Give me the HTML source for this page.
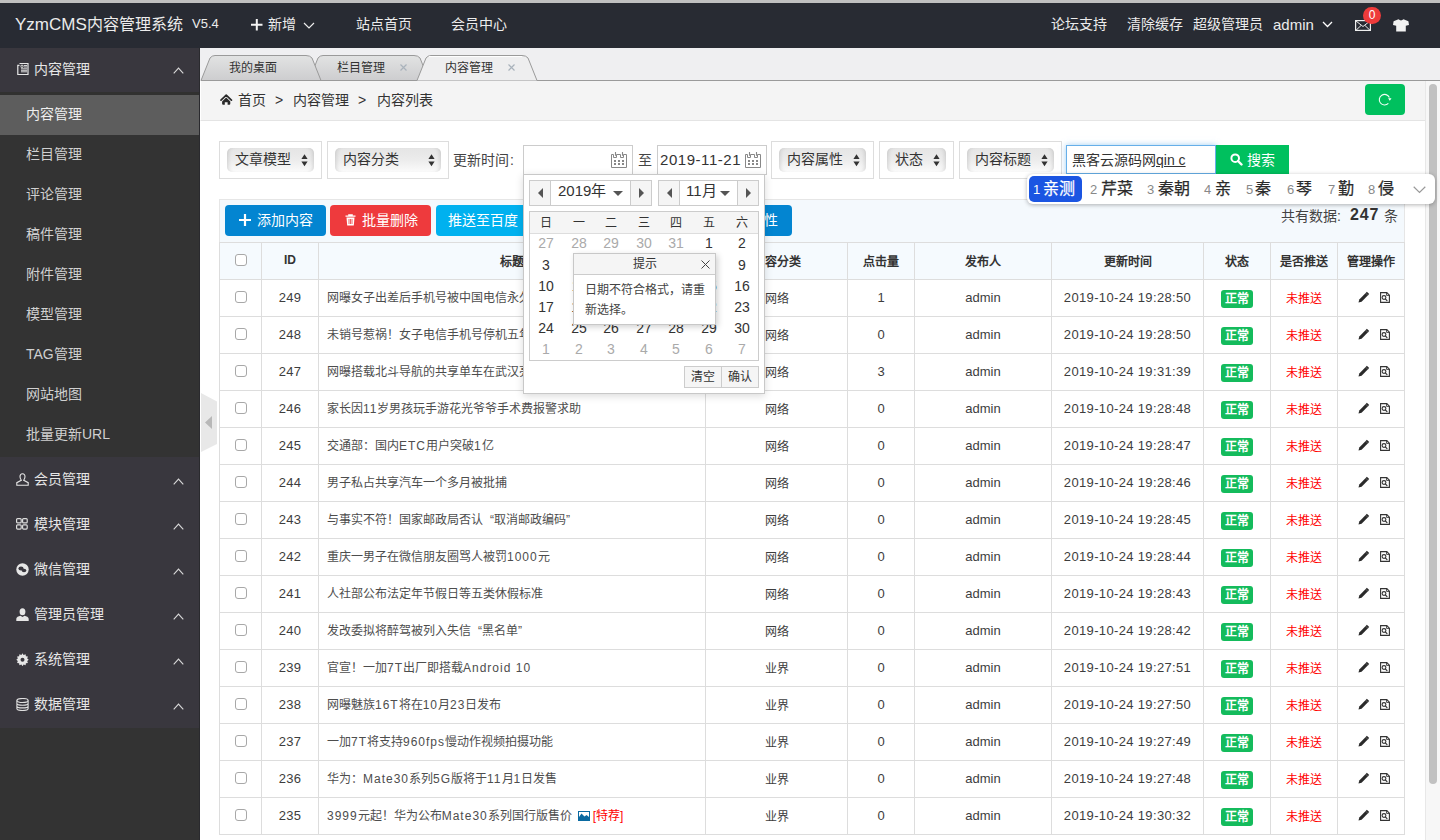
<!DOCTYPE html><html lang="zh-CN"><head><meta charset="utf-8"><style>
*{box-sizing:border-box;margin:0;padding:0}
html,body{width:1440px;height:840px;overflow:hidden;background:#fff;font-family:"Liberation Sans",sans-serif;color:#333}
.abs{position:absolute}
.t{position:absolute;white-space:nowrap}
.top{left:0;top:0;width:1440px;height:3px;background:#c0c0c0}
.hdr{left:0;top:3px;width:1440px;height:45px;background:#282b33;color:#ececec}
.side{left:0;top:48px;width:200px;height:792px;background:#333333;border-right:1px solid #2a2a2e}
.sh{position:absolute;left:0;width:199px;background:#39373e;color:#e6e6e6;font-size:14px}
.si{position:absolute;left:0;width:199px;height:40px;color:#d4d4d4;font-size:14px}
.tabbar{left:200px;top:48px;width:1240px;height:33px;background:#efeff1}
.crumb{left:200px;top:81px;width:1225px;height:40px;background:#f4f4f4;border-bottom:1px solid #e4e4e4;border-left:1px solid #fff}
.content{left:200px;top:121px;width:1225px;height:719px;background:#fff}
.sb{left:1425px;top:81px;width:15px;height:759px;background:#f7f7f7;border-left:1px solid #e8e8e8}
.thumb{left:1429px;top:84px;width:8px;height:700px;background:#c1c1c1;border-radius:4px}
.box{position:absolute;border:1px solid #ddd;background:#fff;top:141px;height:38px}
.sel{position:absolute;top:6px;height:24px;border-radius:5px;background:linear-gradient(#e5e5e5 0%,#ececec 50%,#fbfbfb 100%);box-shadow:inset 4px 0 4px -3px rgba(0,0,0,.14),inset -4px 0 4px -3px rgba(0,0,0,.14);font-size:14px;color:#333}
.sel .t{left:8px;top:1px;line-height:20px}
.arr{position:absolute;right:6px;top:6px;width:7px;height:13px}
.btn{position:absolute;top:205px;height:31px;border-radius:4px;color:#fff;font-size:14px;line-height:31px;white-space:nowrap}
table.g{position:absolute;left:219px;top:242px;border-collapse:collapse;table-layout:fixed;font-size:13px;color:#3d3d3d}
table.g td,table.g th{border:1px solid #ddd;height:37px;text-align:center;padding:0 0 2px 0;white-space:nowrap;overflow:hidden}
table.g th{background:#f5fafe;font-size:12px;font-weight:bold;color:#333}
table.g td.ti{text-align:left;padding:0 0 3px 8px;font-size:12px;color:#4d4d4d}
.ls{letter-spacing:1px}
table.g td.num{letter-spacing:.35px}
.cb{display:inline-block;width:12px;height:12px;border:1px solid #a8a8a8;border-radius:3px;background:#fff;vertical-align:middle;margin-top:-2px}
.badge{display:inline-block;width:32px;height:18px;line-height:19px;background:#14bb5c;color:#fff;border-radius:3px;font-size:12px;font-weight:bold;vertical-align:middle;position:relative;top:2px}
.red{color:#f00;font-size:12px}
.dp{left:523px;top:174px;width:242px;height:220px;background:#fff;border:1px solid #c8c8c8;box-shadow:0 2px 8px rgba(0,0,0,.15)}
</style></head><body>
<div class="abs top"></div>
<div class="abs hdr">
<div class="t" style="left:15px;top:12px;font-size:16px;line-height:20px"><span style="font-size:17px">YzmCMS</span>内容管理系统</div>
<div class="t" style="left:192px;top:12px;font-size:13px;line-height:18px">V5.4</div>
<svg class="abs" style="left:251px;top:16px" width="12" height="12"><path d="M5.8 0V11.5M0 5.75H11.5" stroke="#f4f4f4" stroke-width="2"/></svg>
<div class="t" style="left:268px;top:11px;font-size:14px;line-height:20px">新增</div>
<svg class="abs" style="left:302.5px;top:18.5px" width="12" height="8"><path d="M1 1L6 6L11 1" stroke="#eee" stroke-width="1.2" fill="none"/></svg>
<div class="t" style="left:356px;top:11px;font-size:14px;line-height:20px">站点首页</div>
<div class="t" style="left:451px;top:11px;font-size:14px;line-height:20px">会员中心</div>
<div class="t" style="left:1051px;top:11px;font-size:14px;line-height:20px">论坛支持</div>
<div class="t" style="left:1127px;top:11px;font-size:14px;line-height:20px">清除缓存</div>
<div class="t" style="left:1193px;top:11px;font-size:14px;line-height:20px">超级管理员</div>
<div class="t" style="left:1273px;top:12px;font-size:15px;line-height:20px">admin</div>
<svg class="abs" style="left:1322px;top:18px" width="11" height="8"><path d="M1 1L5.5 5.5L10 1" stroke="#fff" stroke-width="1.3" fill="none"/></svg>
<svg class="abs" style="left:1355px;top:17px" width="16" height="11"><rect x="0.6" y="0.6" width="14.8" height="9.8" fill="none" stroke="#eee" stroke-width="1.2"/><path d="M1 1L8 6.5L15 1M1 10.3L6 5.5M15 10.3L10 5.5" stroke="#eee" stroke-width="1" fill="none"/></svg>
<div class="abs" style="left:1363px;top:4px;width:18px;height:17px;border-radius:9px;background:#ee3b3b;color:#fff;font-size:12px;line-height:17px;text-align:center">0</div>
<svg class="abs" style="left:1393px;top:16px" width="16" height="13"><path d="M5.5 0.3L0.6 2.3L0 6L3.2 6.8V12.6H12.8V6.8L16 6L15.4 2.3L10.5 0.3Q8 2.6 5.5 0.3Z" fill="#f2f2f2"/></svg>
</div>
<div class="abs side"></div>
<div class="sh" style="top:48px;height:44px"></div>
<svg class="abs" style="left:16px;top:62px" width="13" height="13"><path d="M3.5 1.5h8.5v11H1.8V3.3h1.7" fill="none" stroke="#e6e6e6" stroke-width="1.2"/><path d="M5 3.3h2v2h-2zM8 3.5h3M8 5h3M5 6.8h6M5 8.3h6M5 9.8h6" stroke="#e6e6e6" stroke-width="0.9"/></svg>
<div class="t" style="left:34px;top:59px;font-size:14px;line-height:20px;color:#e6e6e6">内容管理</div>
<svg class="abs" style="left:173px;top:67px" width="11" height="7"><path d="M0.7 6.3L5.5 1.2L10.3 6.3" stroke="#d8d8d8" stroke-width="1.15" fill="none"/></svg>
<div class="abs" style="left:0;top:92px;width:199px;height:3px;background:#313130"></div>
<div class="si" style="top:95px;background:#5d5d5d;"></div>
<div class="t" style="left:26px;top:104px;font-size:14px;line-height:20px;color:#eee">内容管理</div>
<div class="si" style="top:135px;"></div>
<div class="t" style="left:26px;top:144px;font-size:14px;line-height:20px;color:#d0d0d0">栏目管理</div>
<div class="si" style="top:175px;"></div>
<div class="t" style="left:26px;top:184px;font-size:14px;line-height:20px;color:#d0d0d0">评论管理</div>
<div class="si" style="top:215px;"></div>
<div class="t" style="left:26px;top:224px;font-size:14px;line-height:20px;color:#d0d0d0">稿件管理</div>
<div class="si" style="top:255px;"></div>
<div class="t" style="left:26px;top:264px;font-size:14px;line-height:20px;color:#d0d0d0">附件管理</div>
<div class="si" style="top:295px;"></div>
<div class="t" style="left:26px;top:304px;font-size:14px;line-height:20px;color:#d0d0d0">模型管理</div>
<div class="si" style="top:335px;"></div>
<div class="t" style="left:26px;top:344px;font-size:14px;line-height:20px;color:#d0d0d0">TAG管理</div>
<div class="si" style="top:375px;"></div>
<div class="t" style="left:26px;top:384px;font-size:14px;line-height:20px;color:#d0d0d0">网站地图</div>
<div class="si" style="top:415px;"></div>
<div class="t" style="left:26px;top:424px;font-size:14px;line-height:20px;color:#d0d0d0">批量更新URL</div>
<div class="sh" style="top:457px;height:271px"></div>
<svg class="abs" style="left:16px;top:473px" width="13" height="13"><path d="M6.5 0.8C4.6 0.8 4 2.4 4 3.8C4 5.2 4.8 6.5 5.3 7.3L0.8 9.7V12.3H12.2V9.7L7.7 7.3C8.2 6.5 9 5.2 9 3.8C9 2.4 8.4 0.8 6.5 0.8Z" fill="none" stroke="#e6e6e6" stroke-width="1.1"/></svg>
<div class="t" style="left:34px;top:469px;font-size:14px;line-height:20px;color:#e6e6e6">会员管理</div>
<svg class="abs" style="left:173px;top:478px" width="11" height="7"><path d="M0.7 6.3L5.5 1.2L10.3 6.3" stroke="#d8d8d8" stroke-width="1.15" fill="none"/></svg>
<svg class="abs" style="left:16px;top:518px" width="12" height="12"><rect x="0.6" y="0.6" width="4.6" height="4.3" rx="1" fill="none" stroke="#ddd" stroke-width="1.2"/><rect x="6.6" y="0.6" width="4.6" height="4.3" rx="1" fill="none" stroke="#ddd" stroke-width="1.2"/><rect x="0.6" y="6.8" width="4.6" height="4.3" rx="1" fill="none" stroke="#ddd" stroke-width="1.2"/><rect x="6.6" y="6.8" width="4.6" height="4.3" rx="1" fill="none" stroke="#ddd" stroke-width="1.2"/></svg>
<div class="t" style="left:34px;top:514px;font-size:14px;line-height:20px;color:#e6e6e6">模块管理</div>
<svg class="abs" style="left:173px;top:523px" width="11" height="7"><path d="M0.7 6.3L5.5 1.2L10.3 6.3" stroke="#d8d8d8" stroke-width="1.15" fill="none"/></svg>
<svg class="abs" style="left:16px;top:563px" width="13" height="13"><circle cx="6.5" cy="6.5" r="6.2" fill="#e6e6e6"/><ellipse cx="5" cy="5.5" rx="2.6" ry="2" fill="#39373e"/><ellipse cx="8" cy="7.5" rx="2.3" ry="1.8" fill="#39373e"/></svg>
<div class="t" style="left:34px;top:559px;font-size:14px;line-height:20px;color:#e6e6e6">微信管理</div>
<svg class="abs" style="left:173px;top:568px" width="11" height="7"><path d="M0.7 6.3L5.5 1.2L10.3 6.3" stroke="#d8d8d8" stroke-width="1.15" fill="none"/></svg>
<svg class="abs" style="left:16px;top:608px" width="13" height="13"><ellipse cx="6.5" cy="3.8" rx="2.9" ry="3.5" fill="#e6e6e6"/><path d="M0.3 13V10.8C0.3 9.2 2.5 8.2 4.5 7.8L6.5 9L8.5 7.8C10.5 8.2 12.7 9.2 12.7 10.8V13Z" fill="#e6e6e6"/></svg>
<div class="t" style="left:34px;top:604px;font-size:14px;line-height:20px;color:#e6e6e6">管理员管理</div>
<svg class="abs" style="left:173px;top:613px" width="11" height="7"><path d="M0.7 6.3L5.5 1.2L10.3 6.3" stroke="#d8d8d8" stroke-width="1.15" fill="none"/></svg>
<svg class="abs" style="left:16px;top:653px" width="13" height="13"><path d="M6.5 0.3L7.6 2.1L9.6 1.3L9.9 3.2L11.9 3.6L11.2 5.6L12.7 6.8L11.2 8L11.9 10L9.9 10.3L9.6 12.3L7.6 11.5L6.5 13.2L5.4 11.5L3.4 12.3L3.1 10.3L1.1 10L1.8 8L0.3 6.8L1.8 5.6L1.1 3.6L3.1 3.2L3.4 1.3L5.4 2.1Z" fill="#e6e6e6"/><circle cx="6.5" cy="6.8" r="2" fill="#39373e"/></svg>
<div class="t" style="left:34px;top:649px;font-size:14px;line-height:20px;color:#e6e6e6">系统管理</div>
<svg class="abs" style="left:173px;top:658px" width="11" height="7"><path d="M0.7 6.3L5.5 1.2L10.3 6.3" stroke="#d8d8d8" stroke-width="1.15" fill="none"/></svg>
<svg class="abs" style="left:16px;top:698px" width="13" height="13"><ellipse cx="6.5" cy="2.5" rx="5.6" ry="2" fill="none" stroke="#e0e0e0" stroke-width="1.1"/><path d="M0.9 2.5V10.5C0.9 11.6 3.4 12.5 6.5 12.5C9.6 12.5 12.1 11.6 12.1 10.5V2.5M0.9 5.2C0.9 6.3 3.4 7.2 6.5 7.2C9.6 7.2 12.1 6.3 12.1 5.2M0.9 7.9C0.9 9 3.4 9.9 6.5 9.9C9.6 9.9 12.1 9 12.1 7.9" fill="none" stroke="#e0e0e0" stroke-width="1.1"/></svg>
<div class="t" style="left:34px;top:694px;font-size:14px;line-height:20px;color:#e6e6e6">数据管理</div>
<svg class="abs" style="left:173px;top:703px" width="11" height="7"><path d="M0.7 6.3L5.5 1.2L10.3 6.3" stroke="#d8d8d8" stroke-width="1.15" fill="none"/></svg>
<div class="abs tabbar"></div>
<svg class="abs" style="left:200px;top:48px" width="1240" height="34">
<defs><linearGradient id="tg" x1="0" y1="0" x2="0" y2="1"><stop offset="0" stop-color="#e2e3e3"/><stop offset="1" stop-color="#cdcdcf"/></linearGradient></defs>
<path d="M1 32.5H1240" stroke="#9a9a9a" stroke-width="1"/>
<path d="M109 32.5L118 10Q120 7.5 123 7.5H214Q218 7.5 220 10L229 32.5Z" fill="url(#tg)" stroke="#9a9a9a" stroke-width="1"/>
<path d="M1 32.5L10 10Q12 7.5 15 7.5H106Q110 7.5 112 10L121 32.5Z" fill="url(#tg)" stroke="#9a9a9a" stroke-width="1"/>
<path d="M217 32.5L226 10Q228 7.5 231 7.5H322Q326 7.5 328 10L337 32.5" fill="#eeeeef" stroke="#9a9a9a" stroke-width="1"/>
<path d="M218 33.5H336" stroke="#eeeeef" stroke-width="1.2"/>
<path d="M229 8.6H322" stroke="#fff" stroke-width="1"/>
</svg>
<div class="t" style="left:229px;top:60px;font-size:12px;line-height:16px;color:#333">我的桌面</div>
<div class="t" style="left:337px;top:60px;font-size:12px;line-height:16px;color:#333">栏目管理</div>
<div class="t" style="left:445px;top:60px;font-size:12px;line-height:16px;color:#333">内容管理</div>
<svg class="abs" style="left:400px;top:64px" width="7" height="7"><path d="M0.5 0.5L6.5 6.5M6.5 0.5L0.5 6.5" stroke="#a9b2bb" stroke-width="1.2"/></svg>
<svg class="abs" style="left:508px;top:64px" width="7" height="7"><path d="M0.5 0.5L6.5 6.5M6.5 0.5L0.5 6.5" stroke="#a9b2bb" stroke-width="1.2"/></svg>
<div class="abs crumb"></div>
<svg class="abs" style="left:219.5px;top:94px" width="13" height="11"><path d="M1 6.2L6.2 1.2L11.4 6.2" fill="none" stroke="#2a2a2a" stroke-width="1.7" stroke-linecap="round" stroke-linejoin="round"/><path d="M6.2 3.6L10.3 7.4V9.8Q10.3 10.8 9.3 10.8H7.6V8.2H4.8V10.8H3.1Q2.1 10.8 2.1 9.8V7.4Z" fill="#2a2a2a"/></svg>
<div class="t" style="left:238px;top:90px;font-size:14px;line-height:20px;color:#333">首页</div>
<div class="t" style="left:275px;top:90px;font-size:14px;line-height:20px;color:#333">&gt;</div>
<div class="t" style="left:293px;top:90px;font-size:14px;line-height:20px;color:#333">内容管理</div>
<div class="t" style="left:358px;top:90px;font-size:14px;line-height:20px;color:#333">&gt;</div>
<div class="t" style="left:377px;top:90px;font-size:14px;line-height:20px;color:#333">内容列表</div>
<div class="abs" style="left:1365px;top:84px;width:40px;height:31px;border-radius:4px;background:#00c05e"></div>
<svg class="abs" style="left:1378px;top:93px" width="15" height="14"><path d="M11.4 4.46A5.3 5.3 0 1 0 10.35 10.45" fill="none" stroke="#f2fff6" stroke-width="1.1"/><path d="M10.1 5.3L13.5 5.3L11.8 7.7Z" fill="#fff"/></svg>
<div class="abs content"></div>
<div class="box" style="left:219px;width:103px"><div class="sel" style="left:7px;width:87px"><div class="t">文章模型</div><svg class="arr" viewBox="0 0 7 13"><path d="M3.5 0.3L6.6 5H0.4Z M3.5 12.3L6.6 7.6H0.4Z" fill="#333"/></svg></div></div>
<div class="box" style="left:327px;width:122px"><div class="sel" style="left:7px;width:106px"><div class="t">内容分类</div><svg class="arr" viewBox="0 0 7 13"><path d="M3.5 0.3L6.6 5H0.4Z M3.5 12.3L6.6 7.6H0.4Z" fill="#333"/></svg></div></div>
<div class="t" style="left:453px;top:150px;font-size:14px;line-height:20px;color:#444">更新时间<span style="margin-left:1px">:</span></div>
<div class="abs" style="left:523px;top:145px;width:110px;height:30px;border:1px solid #ccc;background:#fff"></div>
<svg class="abs" style="left:611px;top:152px" width="16" height="16"><path d="M0.5 2.5H2.5V5.5H5.5V2.5H9.5V5.5H12.5V2.5H15.5V15.5H0.5Z" fill="none" stroke="#888" stroke-width="1"/><path d="M4.5 0V3.8M11.5 0V3.8" stroke="#888" stroke-width="1.1"/><path d="M3 8h2v2h-2zM7 8h2v2h-2zM11 8h2v2h-2zM3 11h2v2h-2zM7 11h2v2h-2zM11 11h2v2h-2z" fill="#888"/></svg>
<div class="t" style="left:638px;top:150px;font-size:14px;line-height:20px;color:#444">至</div>
<div class="abs" style="left:657px;top:145px;width:110px;height:30px;border:1px solid #ccc;background:#fff"></div>
<div class="t" style="left:660px;top:150px;font-size:15px;line-height:20px;color:#333;letter-spacing:.55px">2019-11-21</div>
<svg class="abs" style="left:745px;top:152px" width="16" height="16"><path d="M0.5 2.5H2.5V5.5H5.5V2.5H9.5V5.5H12.5V2.5H15.5V15.5H0.5Z" fill="none" stroke="#888" stroke-width="1"/><path d="M4.5 0V3.8M11.5 0V3.8" stroke="#888" stroke-width="1.1"/><path d="M3 8h2v2h-2zM7 8h2v2h-2zM11 8h2v2h-2zM3 11h2v2h-2zM7 11h2v2h-2zM11 11h2v2h-2z" fill="#888"/></svg>
<div class="box" style="left:771px;width:103px"><div class="sel" style="left:7px;width:87px"><div class="t">内容属性</div><svg class="arr" viewBox="0 0 7 13"><path d="M3.5 0.3L6.6 5H0.4Z M3.5 12.3L6.6 7.6H0.4Z" fill="#333"/></svg></div></div>
<div class="box" style="left:879px;width:75px"><div class="sel" style="left:7px;width:59px"><div class="t">状态</div><svg class="arr" viewBox="0 0 7 13"><path d="M3.5 0.3L6.6 5H0.4Z M3.5 12.3L6.6 7.6H0.4Z" fill="#333"/></svg></div></div>
<div class="box" style="left:959px;width:103px"><div class="sel" style="left:7px;width:87px"><div class="t">内容标题</div><svg class="arr" viewBox="0 0 7 13"><path d="M3.5 0.3L6.6 5H0.4Z M3.5 12.3L6.6 7.6H0.4Z" fill="#333"/></svg></div></div>
<div class="abs" style="left:1066px;top:145px;width:150px;height:29px;border:1px solid #66afe9;background:#fff;box-shadow:0 0 6px rgba(102,175,233,.6)"></div>
<div class="t" style="left:1072px;top:150px;font-size:14px;line-height:20px;color:#333">黑客云源码网<span style="text-decoration:underline">qin c</span></div>
<div class="abs" style="left:1216px;top:145px;width:73px;height:29px;background:#00c05e"></div>
<svg class="abs" style="left:1230px;top:153px" width="13" height="13"><circle cx="5.2" cy="5.2" r="3.8" fill="none" stroke="#fff" stroke-width="2"/><path d="M8 8L11.5 11.5" stroke="#fff" stroke-width="2.4" stroke-linecap="round"/></svg>
<div class="t" style="left:1247px;top:150px;font-size:14px;line-height:20px;color:#fff">搜索</div>
<div class="abs" style="left:219px;top:199px;width:1186px;height:44px;background:#f4f9fd;border:1px solid #e6e6e6;border-bottom:none"></div>
<div class="btn" style="left:225px;width:101px;background:#0385d1"></div>
<svg class="abs" style="left:239px;top:214px" width="12" height="12"><path d="M6 0V12M0 6H12" stroke="#fff" stroke-width="2.2"/></svg>
<div class="t" style="left:257px;top:210px;font-size:14px;line-height:20px;color:#fff">添加内容</div>
<div class="btn" style="left:330px;width:101px;background:#ee3a3d"></div>
<svg class="abs" style="left:345px;top:214px" width="11" height="12"><path d="M0.5 2.2H10.5M3.8 2V0.8H7.2V2" stroke="#fff" stroke-width="1.2" fill="none"/><path d="M1.5 3.5H9.5L8.8 11.5H2.2Z" fill="#fff"/><path d="M4 5V10M5.5 5V10M7 5V10" stroke="#ee3a3d" stroke-width="0.8"/></svg>
<div class="t" style="left:362px;top:210px;font-size:14px;line-height:20px;color:#fff">批量删除</div>
<div class="btn" style="left:436px;width:110px;background:#00b1ef"></div>
<div class="t" style="left:448px;top:210px;font-size:14px;line-height:20px;color:#fff">推送至百度</div>
<div class="btn" style="left:550px;width:242px;background:#0385d1"></div>
<div class="t" style="left:722px;top:210px;font-size:14px;line-height:20px;color:#fff">批量属性</div>
<div class="t" style="left:1281px;top:206px;font-size:14px;line-height:20px;color:#444">共有数据:</div>
<div class="t" style="left:1350px;top:205px;font-size:16px;line-height:20px;color:#333;font-weight:bold;letter-spacing:.9px">247</div>
<div class="t" style="left:1384px;top:206px;font-size:14px;line-height:20px;color:#444">条</div>
<table class="g"><colgroup><col style="width:42px"><col style="width:57px"><col style="width:387px"><col style="width:142px"><col style="width:67px"><col style="width:137px"><col style="width:152px"><col style="width:67px"><col style="width:67px"><col style="width:67px"></colgroup>
<tr><th><span class="cb"></span></th><th>ID</th><th>标题</th><th>内容分类</th><th>点击量</th><th>发布人</th><th>更新时间</th><th>状态</th><th>是否推送</th><th>管理操作</th></tr>
<tr><td><span class="cb"></span></td><td class="num">249</td><td class="ti">网曝女子出差后手机号被中国电信永久停机</td><td style="font-size:12px">网络</td><td>1</td><td>admin</td><td class="num">2019-10-24 19:28:50</td><td><span class="badge">正常</span></td><td><span class="red">未推送</span></td><td style="padding-left:5px"><svg width="12" height="12" style="vertical-align:middle;margin-top:-3px"><path d="M0.5 11.5L1.3 8.4L8.9 0.8L11.2 3.1L3.6 10.7Z" fill="#2a2a2a"/><path d="M7.6 2.1L9.9 4.4" stroke="#888" stroke-width="0.6"/></svg><svg width="10" height="11" style="vertical-align:middle;margin-top:-3px;margin-left:10px;position:relative;top:1px"><path d="M0.6 0.6H6.8L9.4 3.2V10.4H0.6Z" fill="none" stroke="#333" stroke-width="1.1"/><path d="M6.6 0.8V3.4H9.2" fill="none" stroke="#333" stroke-width="0.9"/><circle cx="4" cy="5.5" r="1.9" fill="none" stroke="#333" stroke-width="1.1"/><path d="M5.3 6.9L7.3 8.9" stroke="#333" stroke-width="1.3"/></svg></td></tr>
<tr><td><span class="cb"></span></td><td class="num">248</td><td class="ti">未销号惹祸！女子电信手机号停机五年后被催缴</td><td style="font-size:12px">网络</td><td>0</td><td>admin</td><td class="num">2019-10-24 19:28:50</td><td><span class="badge">正常</span></td><td><span class="red">未推送</span></td><td style="padding-left:5px"><svg width="12" height="12" style="vertical-align:middle;margin-top:-3px"><path d="M0.5 11.5L1.3 8.4L8.9 0.8L11.2 3.1L3.6 10.7Z" fill="#2a2a2a"/><path d="M7.6 2.1L9.9 4.4" stroke="#888" stroke-width="0.6"/></svg><svg width="10" height="11" style="vertical-align:middle;margin-top:-3px;margin-left:10px;position:relative;top:1px"><path d="M0.6 0.6H6.8L9.4 3.2V10.4H0.6Z" fill="none" stroke="#333" stroke-width="1.1"/><path d="M6.6 0.8V3.4H9.2" fill="none" stroke="#333" stroke-width="0.9"/><circle cx="4" cy="5.5" r="1.9" fill="none" stroke="#333" stroke-width="1.1"/><path d="M5.3 6.9L7.3 8.9" stroke="#333" stroke-width="1.3"/></svg></td></tr>
<tr><td><span class="cb"></span></td><td class="num">247</td><td class="ti">网曝搭载北斗导航的共享单车在武汉亮相</td><td style="font-size:12px">网络</td><td>3</td><td>admin</td><td class="num">2019-10-24 19:31:39</td><td><span class="badge">正常</span></td><td><span class="red">未推送</span></td><td style="padding-left:5px"><svg width="12" height="12" style="vertical-align:middle;margin-top:-3px"><path d="M0.5 11.5L1.3 8.4L8.9 0.8L11.2 3.1L3.6 10.7Z" fill="#2a2a2a"/><path d="M7.6 2.1L9.9 4.4" stroke="#888" stroke-width="0.6"/></svg><svg width="10" height="11" style="vertical-align:middle;margin-top:-3px;margin-left:10px;position:relative;top:1px"><path d="M0.6 0.6H6.8L9.4 3.2V10.4H0.6Z" fill="none" stroke="#333" stroke-width="1.1"/><path d="M6.6 0.8V3.4H9.2" fill="none" stroke="#333" stroke-width="0.9"/><circle cx="4" cy="5.5" r="1.9" fill="none" stroke="#333" stroke-width="1.1"/><path d="M5.3 6.9L7.3 8.9" stroke="#333" stroke-width="1.3"/></svg></td></tr>
<tr><td><span class="cb"></span></td><td class="num">246</td><td class="ti">家长因<span class="ls">11</span>岁男孩玩手游花光爷爷手术费报警求助</td><td style="font-size:12px">网络</td><td>0</td><td>admin</td><td class="num">2019-10-24 19:28:48</td><td><span class="badge">正常</span></td><td><span class="red">未推送</span></td><td style="padding-left:5px"><svg width="12" height="12" style="vertical-align:middle;margin-top:-3px"><path d="M0.5 11.5L1.3 8.4L8.9 0.8L11.2 3.1L3.6 10.7Z" fill="#2a2a2a"/><path d="M7.6 2.1L9.9 4.4" stroke="#888" stroke-width="0.6"/></svg><svg width="10" height="11" style="vertical-align:middle;margin-top:-3px;margin-left:10px;position:relative;top:1px"><path d="M0.6 0.6H6.8L9.4 3.2V10.4H0.6Z" fill="none" stroke="#333" stroke-width="1.1"/><path d="M6.6 0.8V3.4H9.2" fill="none" stroke="#333" stroke-width="0.9"/><circle cx="4" cy="5.5" r="1.9" fill="none" stroke="#333" stroke-width="1.1"/><path d="M5.3 6.9L7.3 8.9" stroke="#333" stroke-width="1.3"/></svg></td></tr>
<tr><td><span class="cb"></span></td><td class="num">245</td><td class="ti">交通部：国内<span class="ls">ETC</span>用户突破<span class="ls">1</span>亿</td><td style="font-size:12px">网络</td><td>0</td><td>admin</td><td class="num">2019-10-24 19:28:47</td><td><span class="badge">正常</span></td><td><span class="red">未推送</span></td><td style="padding-left:5px"><svg width="12" height="12" style="vertical-align:middle;margin-top:-3px"><path d="M0.5 11.5L1.3 8.4L8.9 0.8L11.2 3.1L3.6 10.7Z" fill="#2a2a2a"/><path d="M7.6 2.1L9.9 4.4" stroke="#888" stroke-width="0.6"/></svg><svg width="10" height="11" style="vertical-align:middle;margin-top:-3px;margin-left:10px;position:relative;top:1px"><path d="M0.6 0.6H6.8L9.4 3.2V10.4H0.6Z" fill="none" stroke="#333" stroke-width="1.1"/><path d="M6.6 0.8V3.4H9.2" fill="none" stroke="#333" stroke-width="0.9"/><circle cx="4" cy="5.5" r="1.9" fill="none" stroke="#333" stroke-width="1.1"/><path d="M5.3 6.9L7.3 8.9" stroke="#333" stroke-width="1.3"/></svg></td></tr>
<tr><td><span class="cb"></span></td><td class="num">244</td><td class="ti">男子私占共享汽车一个多月被批捕</td><td style="font-size:12px">网络</td><td>0</td><td>admin</td><td class="num">2019-10-24 19:28:46</td><td><span class="badge">正常</span></td><td><span class="red">未推送</span></td><td style="padding-left:5px"><svg width="12" height="12" style="vertical-align:middle;margin-top:-3px"><path d="M0.5 11.5L1.3 8.4L8.9 0.8L11.2 3.1L3.6 10.7Z" fill="#2a2a2a"/><path d="M7.6 2.1L9.9 4.4" stroke="#888" stroke-width="0.6"/></svg><svg width="10" height="11" style="vertical-align:middle;margin-top:-3px;margin-left:10px;position:relative;top:1px"><path d="M0.6 0.6H6.8L9.4 3.2V10.4H0.6Z" fill="none" stroke="#333" stroke-width="1.1"/><path d="M6.6 0.8V3.4H9.2" fill="none" stroke="#333" stroke-width="0.9"/><circle cx="4" cy="5.5" r="1.9" fill="none" stroke="#333" stroke-width="1.1"/><path d="M5.3 6.9L7.3 8.9" stroke="#333" stroke-width="1.3"/></svg></td></tr>
<tr><td><span class="cb"></span></td><td class="num">243</td><td class="ti">与事实不符！国家邮政局否认<span style="margin-left:7px">“</span>取消邮政编码<span style="margin-right:7px">”</span></td><td style="font-size:12px">网络</td><td>0</td><td>admin</td><td class="num">2019-10-24 19:28:45</td><td><span class="badge">正常</span></td><td><span class="red">未推送</span></td><td style="padding-left:5px"><svg width="12" height="12" style="vertical-align:middle;margin-top:-3px"><path d="M0.5 11.5L1.3 8.4L8.9 0.8L11.2 3.1L3.6 10.7Z" fill="#2a2a2a"/><path d="M7.6 2.1L9.9 4.4" stroke="#888" stroke-width="0.6"/></svg><svg width="10" height="11" style="vertical-align:middle;margin-top:-3px;margin-left:10px;position:relative;top:1px"><path d="M0.6 0.6H6.8L9.4 3.2V10.4H0.6Z" fill="none" stroke="#333" stroke-width="1.1"/><path d="M6.6 0.8V3.4H9.2" fill="none" stroke="#333" stroke-width="0.9"/><circle cx="4" cy="5.5" r="1.9" fill="none" stroke="#333" stroke-width="1.1"/><path d="M5.3 6.9L7.3 8.9" stroke="#333" stroke-width="1.3"/></svg></td></tr>
<tr><td><span class="cb"></span></td><td class="num">242</td><td class="ti">重庆一男子在微信朋友圈骂人被罚<span class="ls">1000</span>元</td><td style="font-size:12px">网络</td><td>0</td><td>admin</td><td class="num">2019-10-24 19:28:44</td><td><span class="badge">正常</span></td><td><span class="red">未推送</span></td><td style="padding-left:5px"><svg width="12" height="12" style="vertical-align:middle;margin-top:-3px"><path d="M0.5 11.5L1.3 8.4L8.9 0.8L11.2 3.1L3.6 10.7Z" fill="#2a2a2a"/><path d="M7.6 2.1L9.9 4.4" stroke="#888" stroke-width="0.6"/></svg><svg width="10" height="11" style="vertical-align:middle;margin-top:-3px;margin-left:10px;position:relative;top:1px"><path d="M0.6 0.6H6.8L9.4 3.2V10.4H0.6Z" fill="none" stroke="#333" stroke-width="1.1"/><path d="M6.6 0.8V3.4H9.2" fill="none" stroke="#333" stroke-width="0.9"/><circle cx="4" cy="5.5" r="1.9" fill="none" stroke="#333" stroke-width="1.1"/><path d="M5.3 6.9L7.3 8.9" stroke="#333" stroke-width="1.3"/></svg></td></tr>
<tr><td><span class="cb"></span></td><td class="num">241</td><td class="ti">人社部公布法定年节假日等五类休假标准</td><td style="font-size:12px">网络</td><td>0</td><td>admin</td><td class="num">2019-10-24 19:28:43</td><td><span class="badge">正常</span></td><td><span class="red">未推送</span></td><td style="padding-left:5px"><svg width="12" height="12" style="vertical-align:middle;margin-top:-3px"><path d="M0.5 11.5L1.3 8.4L8.9 0.8L11.2 3.1L3.6 10.7Z" fill="#2a2a2a"/><path d="M7.6 2.1L9.9 4.4" stroke="#888" stroke-width="0.6"/></svg><svg width="10" height="11" style="vertical-align:middle;margin-top:-3px;margin-left:10px;position:relative;top:1px"><path d="M0.6 0.6H6.8L9.4 3.2V10.4H0.6Z" fill="none" stroke="#333" stroke-width="1.1"/><path d="M6.6 0.8V3.4H9.2" fill="none" stroke="#333" stroke-width="0.9"/><circle cx="4" cy="5.5" r="1.9" fill="none" stroke="#333" stroke-width="1.1"/><path d="M5.3 6.9L7.3 8.9" stroke="#333" stroke-width="1.3"/></svg></td></tr>
<tr><td><span class="cb"></span></td><td class="num">240</td><td class="ti">发改委拟将醉驾被列入失信<span style="margin-left:7px">“</span>黑名单<span style="margin-right:7px">”</span></td><td style="font-size:12px">网络</td><td>0</td><td>admin</td><td class="num">2019-10-24 19:28:42</td><td><span class="badge">正常</span></td><td><span class="red">未推送</span></td><td style="padding-left:5px"><svg width="12" height="12" style="vertical-align:middle;margin-top:-3px"><path d="M0.5 11.5L1.3 8.4L8.9 0.8L11.2 3.1L3.6 10.7Z" fill="#2a2a2a"/><path d="M7.6 2.1L9.9 4.4" stroke="#888" stroke-width="0.6"/></svg><svg width="10" height="11" style="vertical-align:middle;margin-top:-3px;margin-left:10px;position:relative;top:1px"><path d="M0.6 0.6H6.8L9.4 3.2V10.4H0.6Z" fill="none" stroke="#333" stroke-width="1.1"/><path d="M6.6 0.8V3.4H9.2" fill="none" stroke="#333" stroke-width="0.9"/><circle cx="4" cy="5.5" r="1.9" fill="none" stroke="#333" stroke-width="1.1"/><path d="M5.3 6.9L7.3 8.9" stroke="#333" stroke-width="1.3"/></svg></td></tr>
<tr><td><span class="cb"></span></td><td class="num">239</td><td class="ti">官宣！一加<span class="ls">7T</span>出厂即搭载<span class="ls">Android 10</span></td><td style="font-size:12px">业界</td><td>0</td><td>admin</td><td class="num">2019-10-24 19:27:51</td><td><span class="badge">正常</span></td><td><span class="red">未推送</span></td><td style="padding-left:5px"><svg width="12" height="12" style="vertical-align:middle;margin-top:-3px"><path d="M0.5 11.5L1.3 8.4L8.9 0.8L11.2 3.1L3.6 10.7Z" fill="#2a2a2a"/><path d="M7.6 2.1L9.9 4.4" stroke="#888" stroke-width="0.6"/></svg><svg width="10" height="11" style="vertical-align:middle;margin-top:-3px;margin-left:10px;position:relative;top:1px"><path d="M0.6 0.6H6.8L9.4 3.2V10.4H0.6Z" fill="none" stroke="#333" stroke-width="1.1"/><path d="M6.6 0.8V3.4H9.2" fill="none" stroke="#333" stroke-width="0.9"/><circle cx="4" cy="5.5" r="1.9" fill="none" stroke="#333" stroke-width="1.1"/><path d="M5.3 6.9L7.3 8.9" stroke="#333" stroke-width="1.3"/></svg></td></tr>
<tr><td><span class="cb"></span></td><td class="num">238</td><td class="ti">网曝魅族<span class="ls">16T</span>将在<span class="ls">10</span>月<span class="ls">23</span>日发布</td><td style="font-size:12px">业界</td><td>0</td><td>admin</td><td class="num">2019-10-24 19:27:50</td><td><span class="badge">正常</span></td><td><span class="red">未推送</span></td><td style="padding-left:5px"><svg width="12" height="12" style="vertical-align:middle;margin-top:-3px"><path d="M0.5 11.5L1.3 8.4L8.9 0.8L11.2 3.1L3.6 10.7Z" fill="#2a2a2a"/><path d="M7.6 2.1L9.9 4.4" stroke="#888" stroke-width="0.6"/></svg><svg width="10" height="11" style="vertical-align:middle;margin-top:-3px;margin-left:10px;position:relative;top:1px"><path d="M0.6 0.6H6.8L9.4 3.2V10.4H0.6Z" fill="none" stroke="#333" stroke-width="1.1"/><path d="M6.6 0.8V3.4H9.2" fill="none" stroke="#333" stroke-width="0.9"/><circle cx="4" cy="5.5" r="1.9" fill="none" stroke="#333" stroke-width="1.1"/><path d="M5.3 6.9L7.3 8.9" stroke="#333" stroke-width="1.3"/></svg></td></tr>
<tr><td><span class="cb"></span></td><td class="num">237</td><td class="ti">一加<span class="ls">7T</span>将支持<span class="ls">960fps</span>慢动作视频拍摄功能</td><td style="font-size:12px">业界</td><td>0</td><td>admin</td><td class="num">2019-10-24 19:27:49</td><td><span class="badge">正常</span></td><td><span class="red">未推送</span></td><td style="padding-left:5px"><svg width="12" height="12" style="vertical-align:middle;margin-top:-3px"><path d="M0.5 11.5L1.3 8.4L8.9 0.8L11.2 3.1L3.6 10.7Z" fill="#2a2a2a"/><path d="M7.6 2.1L9.9 4.4" stroke="#888" stroke-width="0.6"/></svg><svg width="10" height="11" style="vertical-align:middle;margin-top:-3px;margin-left:10px;position:relative;top:1px"><path d="M0.6 0.6H6.8L9.4 3.2V10.4H0.6Z" fill="none" stroke="#333" stroke-width="1.1"/><path d="M6.6 0.8V3.4H9.2" fill="none" stroke="#333" stroke-width="0.9"/><circle cx="4" cy="5.5" r="1.9" fill="none" stroke="#333" stroke-width="1.1"/><path d="M5.3 6.9L7.3 8.9" stroke="#333" stroke-width="1.3"/></svg></td></tr>
<tr><td><span class="cb"></span></td><td class="num">236</td><td class="ti">华为：<span class="ls">Mate30</span>系列<span class="ls">5G</span>版将于<span class="ls">11</span>月<span class="ls">1</span>日发售</td><td style="font-size:12px">业界</td><td>0</td><td>admin</td><td class="num">2019-10-24 19:27:48</td><td><span class="badge">正常</span></td><td><span class="red">未推送</span></td><td style="padding-left:5px"><svg width="12" height="12" style="vertical-align:middle;margin-top:-3px"><path d="M0.5 11.5L1.3 8.4L8.9 0.8L11.2 3.1L3.6 10.7Z" fill="#2a2a2a"/><path d="M7.6 2.1L9.9 4.4" stroke="#888" stroke-width="0.6"/></svg><svg width="10" height="11" style="vertical-align:middle;margin-top:-3px;margin-left:10px;position:relative;top:1px"><path d="M0.6 0.6H6.8L9.4 3.2V10.4H0.6Z" fill="none" stroke="#333" stroke-width="1.1"/><path d="M6.6 0.8V3.4H9.2" fill="none" stroke="#333" stroke-width="0.9"/><circle cx="4" cy="5.5" r="1.9" fill="none" stroke="#333" stroke-width="1.1"/><path d="M5.3 6.9L7.3 8.9" stroke="#333" stroke-width="1.3"/></svg></td></tr>
<tr><td><span class="cb"></span></td><td class="num">235</td><td class="ti"><span class="ls">3999</span>元起！华为公布<span class="ls">Mate30</span>系列国行版售价<svg width="12" height="10" style="vertical-align:middle;margin:-2px 3px 0 6px"><rect x="0" y="0" width="12" height="10" fill="#0a6aa1"/><rect x="1" y="1" width="10" height="5" fill="#fff"/><path d="M1 6L3.5 2.5L6.5 5.5L8.5 4L11 6Z" fill="#0a6aa1"/></svg><span style="color:#f00">[特荐]</span></td><td style="font-size:12px">业界</td><td>0</td><td>admin</td><td class="num">2019-10-24 19:30:32</td><td><span class="badge">正常</span></td><td><span class="red">未推送</span></td><td style="padding-left:5px"><svg width="12" height="12" style="vertical-align:middle;margin-top:-3px"><path d="M0.5 11.5L1.3 8.4L8.9 0.8L11.2 3.1L3.6 10.7Z" fill="#2a2a2a"/><path d="M7.6 2.1L9.9 4.4" stroke="#888" stroke-width="0.6"/></svg><svg width="10" height="11" style="vertical-align:middle;margin-top:-3px;margin-left:10px;position:relative;top:1px"><path d="M0.6 0.6H6.8L9.4 3.2V10.4H0.6Z" fill="none" stroke="#333" stroke-width="1.1"/><path d="M6.6 0.8V3.4H9.2" fill="none" stroke="#333" stroke-width="0.9"/><circle cx="4" cy="5.5" r="1.9" fill="none" stroke="#333" stroke-width="1.1"/><path d="M5.3 6.9L7.3 8.9" stroke="#333" stroke-width="1.3"/></svg></td></tr>
</table>
<svg class="abs" style="left:201px;top:393px" width="17" height="60"><path d="M0 0L16 8.5V51L0 59Z" fill="#e8e8e8"/><path d="M4 29.5L11 23V36Z" fill="#b8b8b8"/></svg>
<div class="abs sb"></div><div class="abs thumb"></div>
<div class="abs" style="left:1027px;top:174px;width:408px;height:30px;background:#fff;border-radius:6px;box-shadow:0 1px 4px rgba(0,0,0,.3)"></div>
<div class="abs" style="left:1029px;top:176px;width:53px;height:26px;background:#1b55e2;border-radius:5px"></div>
<div class="t" style="left:1033px;top:182px;font-size:13px;line-height:16px;color:#fff">1</div>
<div class="t" style="left:1043px;top:179px;font-size:16px;line-height:20px;color:#fff;-webkit-text-stroke:.25px #fff">亲测</div>
<div class="t" style="left:1090px;top:182px;font-size:13px;line-height:16px;color:#888">2</div>
<div class="t" style="left:1101px;top:179px;font-size:16px;line-height:20px;color:#2a2a2a;-webkit-text-stroke:.25px #2a2a2a">芹菜</div>
<div class="t" style="left:1147px;top:182px;font-size:13px;line-height:16px;color:#888">3</div>
<div class="t" style="left:1158px;top:179px;font-size:16px;line-height:20px;color:#2a2a2a;-webkit-text-stroke:.25px #2a2a2a">秦朝</div>
<div class="t" style="left:1204px;top:182px;font-size:13px;line-height:16px;color:#888">4</div>
<div class="t" style="left:1215px;top:179px;font-size:16px;line-height:20px;color:#2a2a2a;-webkit-text-stroke:.25px #2a2a2a">亲</div>
<div class="t" style="left:1246px;top:182px;font-size:13px;line-height:16px;color:#888">5</div>
<div class="t" style="left:1255px;top:179px;font-size:16px;line-height:20px;color:#2a2a2a;-webkit-text-stroke:.25px #2a2a2a">秦</div>
<div class="t" style="left:1287px;top:182px;font-size:13px;line-height:16px;color:#888">6</div>
<div class="t" style="left:1296px;top:179px;font-size:16px;line-height:20px;color:#2a2a2a;-webkit-text-stroke:.25px #2a2a2a">琴</div>
<div class="t" style="left:1328px;top:182px;font-size:13px;line-height:16px;color:#888">7</div>
<div class="t" style="left:1338px;top:179px;font-size:16px;line-height:20px;color:#2a2a2a;-webkit-text-stroke:.25px #2a2a2a">勤</div>
<div class="t" style="left:1368px;top:182px;font-size:13px;line-height:16px;color:#888">8</div>
<div class="t" style="left:1378px;top:179px;font-size:16px;line-height:20px;color:#2a2a2a;-webkit-text-stroke:.25px #2a2a2a">侵</div>
<svg class="abs" style="left:1413px;top:186px" width="13" height="8"><path d="M0.7 0.8L6.5 6.5L12.3 0.8" stroke="#999" stroke-width="1.2" fill="none"/></svg>
<div class="abs dp"></div>
<div class="abs" style="left:529px;top:180px;width:123px;height:26px;border:1px solid #ccc;background:#f5f5f5"></div>
<div class="abs" style="left:550px;top:181px;width:81px;height:24px;border-left:1px solid #ccc;border-right:1px solid #ccc;background:#fff"></div>
<svg class="abs" style="left:538px;top:188px" width="6" height="10"><path d="M5 0V10L0 5Z" fill="#555"/></svg>
<svg class="abs" style="left:639px;top:188px" width="6" height="10"><path d="M0 0V10L5 5Z" fill="#555"/></svg>
<div class="t" style="left:558px;top:181px;font-size:15px;line-height:20px;color:#333">2019年</div>
<svg class="abs" style="left:613px;top:191px" width="10" height="5"><path d="M0 0H10L5 5Z" fill="#555"/></svg>
<div class="abs" style="left:658px;top:180px;width:101px;height:26px;border:1px solid #ccc;background:#f5f5f5"></div>
<div class="abs" style="left:679px;top:181px;width:59px;height:24px;border-left:1px solid #ccc;border-right:1px solid #ccc;background:#fff"></div>
<svg class="abs" style="left:667px;top:188px" width="6" height="10"><path d="M5 0V10L0 5Z" fill="#555"/></svg>
<svg class="abs" style="left:746px;top:188px" width="6" height="10"><path d="M0 0V10L5 5Z" fill="#555"/></svg>
<div class="t" style="left:686px;top:181px;font-size:15px;line-height:20px;color:#333">11月</div>
<svg class="abs" style="left:720px;top:191px" width="10" height="5"><path d="M0 0H10L5 5Z" fill="#555"/></svg>
<div class="abs" style="left:529px;top:211px;width:230px;height:150px;border:1px solid #ccc;background:#fff"></div>
<div class="abs" style="left:530px;top:212px;width:228px;height:22px;background:#f5f5f5;border-bottom:1px solid #ddd"></div>
<div class="t" style="left:531px;top:215px;width:30px;text-align:center;font-size:12px;line-height:16px;color:#333">日</div>
<div class="t" style="left:564px;top:215px;width:30px;text-align:center;font-size:12px;line-height:16px;color:#333">一</div>
<div class="t" style="left:596px;top:215px;width:30px;text-align:center;font-size:12px;line-height:16px;color:#333">二</div>
<div class="t" style="left:629px;top:215px;width:30px;text-align:center;font-size:12px;line-height:16px;color:#333">三</div>
<div class="t" style="left:661px;top:215px;width:30px;text-align:center;font-size:12px;line-height:16px;color:#333">四</div>
<div class="t" style="left:694px;top:215px;width:30px;text-align:center;font-size:12px;line-height:16px;color:#333">五</div>
<div class="t" style="left:727px;top:215px;width:30px;text-align:center;font-size:12px;line-height:16px;color:#333">六</div>
<div class="t" style="left:531px;top:235px;width:30px;text-align:center;font-size:14px;line-height:16px;color:#aaa">27</div>
<div class="t" style="left:564px;top:235px;width:30px;text-align:center;font-size:14px;line-height:16px;color:#aaa">28</div>
<div class="t" style="left:596px;top:235px;width:30px;text-align:center;font-size:14px;line-height:16px;color:#aaa">29</div>
<div class="t" style="left:629px;top:235px;width:30px;text-align:center;font-size:14px;line-height:16px;color:#aaa">30</div>
<div class="t" style="left:661px;top:235px;width:30px;text-align:center;font-size:14px;line-height:16px;color:#aaa">31</div>
<div class="t" style="left:694px;top:235px;width:30px;text-align:center;font-size:14px;line-height:16px;color:#333">1</div>
<div class="t" style="left:727px;top:235px;width:30px;text-align:center;font-size:14px;line-height:16px;color:#333">2</div>
<div class="t" style="left:531px;top:257px;width:30px;text-align:center;font-size:14px;line-height:16px;color:#333">3</div>
<div class="t" style="left:564px;top:257px;width:30px;text-align:center;font-size:14px;line-height:16px;color:#333">4</div>
<div class="t" style="left:596px;top:257px;width:30px;text-align:center;font-size:14px;line-height:16px;color:#333">5</div>
<div class="t" style="left:629px;top:257px;width:30px;text-align:center;font-size:14px;line-height:16px;color:#333">6</div>
<div class="t" style="left:661px;top:257px;width:30px;text-align:center;font-size:14px;line-height:16px;color:#333">7</div>
<div class="t" style="left:694px;top:257px;width:30px;text-align:center;font-size:14px;line-height:16px;color:#333">8</div>
<div class="t" style="left:727px;top:257px;width:30px;text-align:center;font-size:14px;line-height:16px;color:#333">9</div>
<div class="t" style="left:531px;top:278px;width:30px;text-align:center;font-size:14px;line-height:16px;color:#333">10</div>
<div class="t" style="left:564px;top:278px;width:30px;text-align:center;font-size:14px;line-height:16px;color:#333">11</div>
<div class="t" style="left:596px;top:278px;width:30px;text-align:center;font-size:14px;line-height:16px;color:#333">12</div>
<div class="t" style="left:629px;top:278px;width:30px;text-align:center;font-size:14px;line-height:16px;color:#333">13</div>
<div class="t" style="left:661px;top:278px;width:30px;text-align:center;font-size:14px;line-height:16px;color:#333">14</div>
<div class="t" style="left:694px;top:278px;width:30px;text-align:center;font-size:14px;line-height:16px;color:#333">15</div>
<div class="t" style="left:727px;top:278px;width:30px;text-align:center;font-size:14px;line-height:16px;color:#333">16</div>
<div class="t" style="left:531px;top:299px;width:30px;text-align:center;font-size:14px;line-height:16px;color:#333">17</div>
<div class="t" style="left:564px;top:299px;width:30px;text-align:center;font-size:14px;line-height:16px;color:#333">18</div>
<div class="t" style="left:596px;top:299px;width:30px;text-align:center;font-size:14px;line-height:16px;color:#333">19</div>
<div class="t" style="left:629px;top:299px;width:30px;text-align:center;font-size:14px;line-height:16px;color:#333">20</div>
<div class="t" style="left:661px;top:299px;width:30px;text-align:center;font-size:14px;line-height:16px;color:#333">21</div>
<div class="t" style="left:694px;top:299px;width:30px;text-align:center;font-size:14px;line-height:16px;color:#333">22</div>
<div class="t" style="left:727px;top:299px;width:30px;text-align:center;font-size:14px;line-height:16px;color:#333">23</div>
<div class="t" style="left:531px;top:320px;width:30px;text-align:center;font-size:14px;line-height:16px;color:#333">24</div>
<div class="t" style="left:564px;top:320px;width:30px;text-align:center;font-size:14px;line-height:16px;color:#333">25</div>
<div class="t" style="left:596px;top:320px;width:30px;text-align:center;font-size:14px;line-height:16px;color:#333">26</div>
<div class="t" style="left:629px;top:320px;width:30px;text-align:center;font-size:14px;line-height:16px;color:#333">27</div>
<div class="t" style="left:661px;top:320px;width:30px;text-align:center;font-size:14px;line-height:16px;color:#333">28</div>
<div class="t" style="left:694px;top:320px;width:30px;text-align:center;font-size:14px;line-height:16px;color:#333">29</div>
<div class="t" style="left:727px;top:320px;width:30px;text-align:center;font-size:14px;line-height:16px;color:#333">30</div>
<div class="t" style="left:531px;top:341px;width:30px;text-align:center;font-size:14px;line-height:16px;color:#aaa">1</div>
<div class="t" style="left:564px;top:341px;width:30px;text-align:center;font-size:14px;line-height:16px;color:#aaa">2</div>
<div class="t" style="left:596px;top:341px;width:30px;text-align:center;font-size:14px;line-height:16px;color:#aaa">3</div>
<div class="t" style="left:629px;top:341px;width:30px;text-align:center;font-size:14px;line-height:16px;color:#aaa">4</div>
<div class="t" style="left:661px;top:341px;width:30px;text-align:center;font-size:14px;line-height:16px;color:#aaa">5</div>
<div class="t" style="left:694px;top:341px;width:30px;text-align:center;font-size:14px;line-height:16px;color:#aaa">6</div>
<div class="t" style="left:727px;top:341px;width:30px;text-align:center;font-size:14px;line-height:16px;color:#aaa">7</div>
<div class="abs" style="left:684px;top:366px;width:75px;height:22px;border:1px solid #ccc;background:#f5f5f5"></div>
<div class="abs" style="left:721px;top:367px;width:1px;height:20px;background:#ccc"></div>
<div class="t" style="left:691px;top:369px;font-size:12px;line-height:16px;color:#333">清空</div>
<div class="t" style="left:728px;top:369px;font-size:12px;line-height:16px;color:#333">确认</div>
<div class="abs" style="left:573px;top:253px;width:143px;height:72px;border:1px solid #c8c8c8;background:#fff;box-shadow:2px 2px 6px rgba(0,0,0,.18)"></div>
<div class="abs" style="left:574px;top:254px;width:141px;height:21px;background:#f5f5f5;border-bottom:1px solid #ccc"></div>
<div class="t" style="left:633px;top:256px;font-size:12px;line-height:16px;color:#333">提示</div>
<svg class="abs" style="left:701px;top:260px" width="9" height="9"><path d="M0.5 0.5L8.5 8.5M8.5 0.5L0.5 8.5" stroke="#444" stroke-width="1"/></svg>
<div class="t" style="left:585px;top:280px;font-size:12px;line-height:20px;color:#444">日期不符合格式，请重<br>新选择。</div>
</body></html>
